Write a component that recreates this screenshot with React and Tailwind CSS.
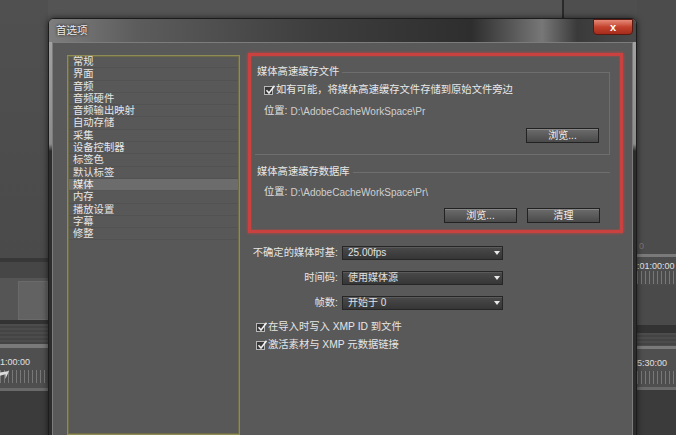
const items = ['常规', '界面', '音频', '音频硬件', '音频输出映射', '自动存储', '采集', '设备控制器', '标签色', '默认标签', '媒体', '内存', '播放设置', '字幕', '修整'];

function Check() {
  return (
    <span className="relative inline-block w-[9px] h-[9px] border border-[#b8b8b8] bg-[#383838] shrink-0">
      <svg viewBox="0 0 10 10" className="absolute -top-[2px] left-[0px] w-[10px] h-[10px]">
        <path d="M1.5 5.2 L4 8 L9.5 0.8" fill="none" stroke="#f2f2f2" strokeWidth="1.5" />
      </svg>
    </span>
  );
}

function Btn({ children }) {
  return (
    <div className="w-[73px] h-[15px] flex items-center justify-center border border-[#222] bg-gradient-to-b from-[#6c6c6c] to-[#4a4a4a] shadow-[inset_0_1px_0_#858585] text-[10px] text-[#f0f0f0]">
      {children}
    </div>
  );
}

function Select({ value }) {
  return (
    <div className="w-[161px] h-[14px] flex items-center border border-[#262626] bg-gradient-to-b from-[#4a4a4a] to-[#363636] shadow-[inset_0_1px_0_#5a5a5a] text-[10px] text-[#e2e2e2]">
      <span className="flex-1 pl-[5px] leading-none">{value}</span>
      <span className="w-[11px] h-full flex items-center justify-center">
        <svg viewBox="0 0 6 4" className="w-[6px] h-[4px]">
          <path d="M0 0 H6 L3 4 Z" fill="#e8e8e8" />
        </svg>
      </span>
    </div>
  );
}

function Ticks() {
  return <div className="h-[13px] bg-[repeating-linear-gradient(90deg,#8a8a8a_0_1px,#4c4c4c_1px_4px)] opacity-70" />;
}

export default function App() {
  return (
    <div className="relative w-[676px] h-[435px] overflow-hidden bg-[#4d4d4d] font-['Liberation_Sans','Noto_Sans_CJK_SC',sans-serif]">
      {/* application behind the dialog */}
      <div className="flex h-full">
        <div className="w-[48px] flex flex-col">
          <div className="h-[258px] bg-gradient-to-b from-[#505050] to-[#4a4a4a]" />
          <div className="h-[4px] bg-[#383838]" />
          <div className="h-[16px] bg-[#464646]" />
          <div className="h-[42px] bg-[#555] flex justify-end pt-[3px]">
            <div className="w-[30px] h-[39px] bg-[#626262] border border-[#6a6a6a]" />
          </div>
          <div className="h-[4px] bg-[#333]" />
          <div className="h-[20px] bg-[repeating-linear-gradient(180deg,#4c4c4c_0_2px,#444_2px_4px)]" />
          <div className="h-[4px] bg-[#7a7a7a]" />
          <div className="h-[40px] bg-[#4f4f4f] flex flex-col pt-[9px]">
            <div className="text-[9px] leading-[10px] text-[#e0e0e0] whitespace-nowrap">1:00:00</div>
            <div className="relative mt-[3px]">
              <Ticks />
              <div className="absolute left-0 top-[1px] w-[9px] h-[8px] bg-[#ddd] [clip-path:polygon(0_20%,100%_0,60%_100%,60%_40%,0_60%)]" />
            </div>
          </div>
          <div className="h-[3px] bg-[#6a6a6a]" />
          <div className="flex-1 bg-[#3b3b3b]" />
        </div>
        <div className="flex-1 flex">
          <div className="flex-1 bg-[#545454]" />
          <div className="w-[2px] bg-[#2a2a2a]" />
          <div className="w-[73px] bg-[#4e4e4e]" />
        </div>
        <div className="w-[39px] flex flex-col">
          <div className="h-[240px] bg-[#4c4c4c]" />
          <div className="h-[14px] bg-[#4c4c4c] text-[9px] text-[#777] pl-[2px]">0</div>
          <div className="h-[3px] bg-[#7a7a7a]" />
          <div className="h-[28px] bg-[#4d4d4d] pt-[4px]">
            <div className="text-[9px] leading-[10px] text-[#e0e0e0] whitespace-nowrap overflow-hidden">:01:00:00</div>
            <Ticks />
          </div>
          <div className="h-[40px] bg-[#4a4a4a]" />
          <div className="h-[8px] bg-[#333]" />
          <div className="h-[13px] bg-[repeating-linear-gradient(180deg,#4c4c4c_0_2px,#444_2px_4px)]" />
          <div className="h-[3px] bg-[#7a7a7a]" />
          <div className="h-[38px] bg-[#4f4f4f] pt-[9px]">
            <div className="text-[9px] leading-[10px] text-[#e0e0e0] whitespace-nowrap overflow-hidden">5:30:00</div>
            <div className="mt-[3px]"><Ticks /></div>
          </div>
          <div className="h-[3px] bg-[#6a6a6a]" />
          <div className="flex-1 bg-[#3b3b3b]" />
        </div>
      </div>

      {/* preferences dialog */}
      <div className="absolute left-[48px] top-[18px] w-[589px] h-[420px] flex flex-col rounded-t-[6px] border border-[#1c1c1c] bg-[linear-gradient(180deg,#a6a6a6_0,#8c8c8c_125px,#2c2c2c_132px,#2c2c2c_100%)] shadow-[0_0_6px_rgba(0,0,0,0.6)]">
        <div className="h-[23px] flex items-start rounded-t-[5px] bg-[linear-gradient(90deg,#7e7e7e_0%,#5c5c5c_15%,#3e3e3e_45%,#2e2e2e_72%,#777_84%,#3a3a3a_90%,#4a4a4a_100%)]">
          <div className="flex-1 pl-[7px] pt-[5px] text-[10.5px] leading-[12px] text-[#ececec] [text-shadow:0_0_3px_#000]">首选项</div>
          <div className="mt-[0px] mr-[3px] w-[40px] h-[16px] flex items-center justify-center rounded-b-[4px] border border-[#5a1a12] bg-gradient-to-b from-[#e58a78] via-[#c3422d] to-[#a52c1c] text-[11px] font-bold leading-none text-white">
            x
          </div>
        </div>
        <div className="flex-1 mx-[3px] border border-[#7c7c7c] bg-[#595959] flex items-start pl-[14px] pt-[10px]">
          {/* category list */}
          <div className="mt-[2px] w-[173px] h-[380px] border border-[#8f8b56] shadow-[inset_0_0_0_1px_#6e6c47] bg-[#585858] pt-[0px] px-[1px]">
            {items.map((it) => (
              <div
                key={it}
                className={
                  it === '媒体'
                    ? 'h-[12.3px] pl-[4px] text-[10.3px] leading-[12.3px] text-[#ececec] bg-[#6c6c6c] border-b border-[#555]'
                    : 'h-[12.3px] pl-[4px] text-[10.3px] leading-[12.3px] text-[#e6e6e6] border-b border-[#525252]'
                }
              >
                {it}
              </div>
            ))}
          </div>

          <div className="ml-[8px] w-[375px] flex flex-col">
            {/* highlighted media cache section */}
            <div className="h-[180px] border-[3px] border-[#c9423f] shadow-[0_0_3px_#c9423f,inset_0_0_2px_#c9423f] flex flex-col pt-[10px]">
              <div className="ml-[4px] mr-[10px]">
                <div className="h-[12px] flex items-end">
                  <span className="pl-[2px] pr-[3px] text-[10.3px] leading-[12px] text-[#e8e8e8]">媒体高速缓存文件</span>
                  <div className="flex-1 h-[6px] border-t border-r border-[#6e6e6e]" />
                </div>
                <div className="border-r border-b border-[#6e6e6e] pl-[9px] pb-[11px] flex flex-col">
                  <div className="mt-[5px] h-[14px] flex items-center gap-[3px] text-[10.3px] text-[#e8e8e8]">
                    <Check />
                    <span>如有可能，将媒体高速缓存文件存储到原始文件旁边</span>
                  </div>
                  <div className="mt-[7px] h-[14px] flex items-center text-[10px] text-[#cfcfcf]">
                    <span className="text-[10.3px] text-[#e0e0e0]">位置:</span>
                    <span className="ml-[3px]">D:\AdobeCacheWorkSpace\Pr</span>
                  </div>
                  <div className="mt-[10px] self-end mr-[10px]">
                    <Btn>浏览...</Btn>
                  </div>
                </div>
              </div>

              <div className="ml-[4px] mr-[10px] mt-[11px]">
                <div className="h-[12px] flex items-end">
                  <span className="pl-[2px] pr-[3px] text-[10.3px] leading-[12px] text-[#e8e8e8]">媒体高速缓存数据库</span>
                  <div className="flex-1 h-[6px] border-t border-[#6e6e6e]" />
                </div>
                <div className="pl-[9px] flex flex-col">
                  <div className="mt-[7px] h-[14px] flex items-center text-[10px] text-[#cfcfcf]">
                    <span className="text-[10.3px] text-[#e0e0e0]">位置:</span>
                    <span className="ml-[3px]">D:\AdobeCacheWorkSpace\Pr\</span>
                  </div>
                  <div className="mt-[9px] self-end mr-[10px] flex gap-[10px]">
                    <Btn>浏览...</Btn>
                    <Btn>清理</Btn>
                  </div>
                </div>
              </div>
            </div>

            {/* other media settings */}
            <div className="mt-[13px] ml-[2px] flex flex-col gap-[11px]">
              {[
                ['不确定的媒体时基:', '25.00fps'],
                ['时间码:', '使用媒体源'],
                ['帧数:', '开始于 0'],
              ].map(([label, value]) => (
                <div key={label} className="flex items-center gap-[4px]">
                  <span className="w-[88px] text-right text-[10.3px] leading-[14px] text-[#e6e6e6] whitespace-nowrap">{label}</span>
                  <Select value={value} />
                </div>
              ))}
            </div>
            <div className="mt-[10px] ml-[8px] flex flex-col gap-[4px]">
              <div className="h-[14px] flex items-center gap-[3px] text-[10.3px] text-[#e6e6e6]">
                <Check />
                <span>在导入时写入 XMP ID 到文件</span>
              </div>
              <div className="h-[14px] flex items-center gap-[3px] text-[10.3px] text-[#e6e6e6]">
                <Check />
                <span>激活素材与 XMP 元数据链接</span>
              </div>
            </div>
          </div>
        </div>
      </div>
    </div>
  );
}
